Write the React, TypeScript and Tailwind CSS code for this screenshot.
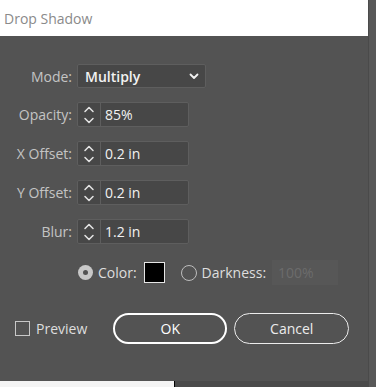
import React from 'react';

const font = { fontFamily: '"Open Sans", "Noto Sans", sans-serif' };

function Spinner() {
  return (
    <div className="flex h-full w-[23px] items-center justify-center border-r border-[#5e5e5e]">
      <svg width="12" height="20" viewBox="0 0 12 20" fill="none" stroke="#e6e6e6" strokeWidth="1.5" strokeLinecap="round" strokeLinejoin="round">
        <path d="M2 6.5 L6 2.5 L10 6.5" />
        <path d="M2 13.5 L6 17.5 L10 13.5" />
      </svg>
    </div>
  );
}

function Field({ label, value }: { label: string; value: string }) {
  return (
    <div className="flex h-[25px] items-center">
      <span className="w-[73px] pr-[1px] text-right text-[14px] text-[#c4c4c4]">{label}</span>
      <div className="ml-[4px] flex h-[25px] w-[112px] items-center rounded-[2px] border border-[#5e5e5e] bg-[#474747]">
        <Spinner />
        <span className="pl-[4px] text-[14px] text-[#f2f2f2]">{value}</span>
      </div>
    </div>
  );
}

export default function App() {
  return (
    <div className="flex h-[387px] w-[376px] overflow-hidden bg-[#4a4a4a]" style={font}>
      <div className="flex w-[368px] flex-col">
        <div className="flex h-[381px] flex-col bg-[#535353]">
          <div className="flex h-[36px] items-center bg-white pl-[4px] text-[14px] text-[#8a8a8a]">
            Drop Shadow
          </div>

          <div className="mt-[28px] flex flex-col gap-[14px]">
            <div className="flex h-[24px] items-center">
              <span className="w-[73px] pr-[1px] text-right text-[14px] text-[#c4c4c4]">Mode:</span>
              <div className="ml-[4px] flex h-[24px] w-[129px] items-center justify-between rounded-[2px] border border-[#5e5e5e] bg-[#474747] pl-[7px] pr-[6px]">
                <span className="text-[14px] font-semibold text-[#f2f2f2]">Multiply</span>
                <svg width="10" height="7" viewBox="0 0 10 7" fill="none" stroke="#f2f2f2" strokeWidth="1.8" strokeLinecap="round" strokeLinejoin="round">
                  <path d="M1.5 1.5 L5 5 L8.5 1.5" />
                </svg>
              </div>
            </div>
            <Field label="Opacity:" value="85%" />
            <Field label="X Offset:" value="0.2 in" />
            <Field label="Y Offset:" value="0.2 in" />
            <Field label="Blur:" value="1.2 in" />
          </div>

          <div className="mt-[16px] flex h-[25px] items-center pl-[78px]">
            <span className="flex h-[15px] w-[15px] items-center justify-center rounded-full bg-[#c8c8c8]">
              <span className="h-[5px] w-[5px] rounded-full bg-[#535353]" />
            </span>
            <span className="ml-[5px] text-[14px] text-[#dedede]">Color:</span>
            <span className="ml-[7px] h-[21px] w-[21px] border-[1.5px] border-[#e6e6e6] bg-black" />
            <span className="ml-[16px] h-[16px] w-[16px] rounded-full border-[1.5px] border-[#bdbdbd]" />
            <span className="ml-[5px] text-[14px] text-[#dedede]">Darkness:</span>
            <div className="ml-[6px] flex h-[25px] w-[66px] items-center bg-[#575757] pl-[6px] text-[14px] text-[#6c6c6c]">
              100%
            </div>
          </div>

          <div className="mt-[28px] flex h-[31px] items-center">
            <span className="ml-[15px] h-[15px] w-[15px] border border-[#c8c8c8]" />
            <span className="ml-[6px] text-[14px] text-[#dedede]">Preview</span>
            <button className="ml-[26px] h-[31px] w-[114px] rounded-full border-2 border-white text-[14px] text-white">
              OK
            </button>
            <button className="ml-[7px] h-[31px] w-[115px] rounded-full border-[1.5px] border-[#ececec] text-[14px] text-[#ececec]">
              Cancel
            </button>
          </div>
        </div>
        <div className="flex flex-1">
          <div className="w-[174px] bg-[#f4f4f4]" />
          <div className="w-px bg-black" />
          <div className="flex-1 bg-[#4a4a4a]" />
        </div>
      </div>
      <div className="w-[8px] border-l border-[#4a4a4a] bg-[#585858]" />
    </div>
  );
}
